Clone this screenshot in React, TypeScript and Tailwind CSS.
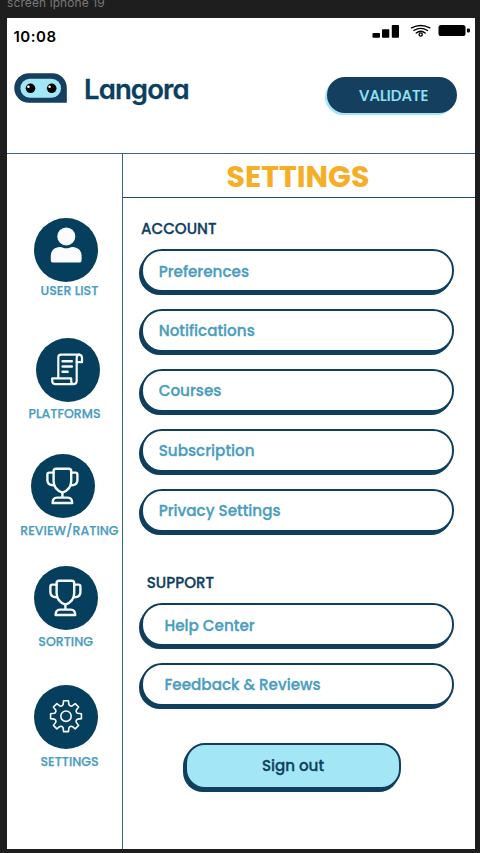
import type { ReactNode } from "react";

function UserIcon() {
  return (
    <svg viewBox="0 0 64 64" className="size-full" fill="#fbfcfd">
      <path d="M24 29.2 Q16.8 30.5 16.8 38.5 V42 Q16.8 44.6 19.4 44.6 H45 Q47.6 44.6 47.6 42 V38.5 Q47.6 30.5 40.4 29.2 Q37.5 28.7 35.5 29.7 Q32.2 31 29 29.7 Q27 28.7 24 29.2 Z" />
      <circle cx="32.3" cy="18.4" r="9" />
    </svg>
  );
}

function ScrollIcon() {
  return (
    <svg viewBox="0 0 64 64" className="size-full" fill="none" stroke="#f6f9fb" strokeWidth="2.2" strokeLinejoin="round" strokeLinecap="round">
      <path d="M22.3 39.8 V19.3 Q22.3 16.6 25 16.6 H43.2 Q46 16.9 46 20 V24.2 H40.8" />
      <path d="M43.2 16.6 Q40.7 17 40.7 20 V43.2 Q40.4 46.2 37.6 46.2 H19.2 Q16.2 46 16.2 42.8 V40.4 H35.2 V43.2 Q35.3 46 37.8 46.2" />
      <path d="M26.6 23.2 H35.8 M26.6 28.4 H35.8 M26.6 33.8 H31.6" strokeWidth="2.5" />
    </svg>
  );
}

function TrophyIcon() {
  return (
    <svg viewBox="0 0 64 64" className="size-full" fill="none" stroke="#f6f9fb" strokeWidth="2.4" strokeLinejoin="round" strokeLinecap="round">
      <path d="M25 14.8 H37.8 Q40.2 14.8 40.2 17.2 V27 C40.2 33 36.5 36.8 31.4 38.6 C26.3 36.8 22.6 33 22.6 27 V17.2 Q22.6 14.8 25 14.8 Z" />
      <path d="M22.6 18.6 H18.3 Q16.4 18.6 16.4 20.6 V26 Q16.4 30.3 20.6 31 L23.4 31.4" />
      <path d="M40.2 18.6 H44.5 Q46.4 18.6 46.4 20.6 V26 Q46.4 30.3 42.2 31 L39.4 31.4" />
      <path d="M31.4 38.8 V43.4 M26 43.6 H36.8 Q41.2 43.6 41.2 49 H21.6 Q21.6 43.6 26 43.6 Z" />
    </svg>
  );
}

// Outline of a cog: each tooth is a run of points, given as [angle offset, radius].
const tooth: [number, number][] = [
  [-19, 11.2],
  [-14, 12],
  [-9, 15.6],
  [9, 15.6],
  [14, 12],
  [19, 11.2],
];
const cog = Array.from({ length: 8 }, (_, i) =>
  tooth.map(([a, r]) => {
    const t = ((i * 45 + a) * Math.PI) / 180;
    return `${(32 + r * Math.sin(t)).toFixed(2)},${(31.2 - r * Math.cos(t)).toFixed(2)}`;
  }).join(" "),
).join(" ");

function GearIcon() {
  return (
    <svg viewBox="0 0 64 64" className="size-full" fill="none" stroke="#f6f9fb" strokeWidth="1.6" strokeLinejoin="round">
      <polygon points={cog} />
      <circle cx="32" cy="31.2" r="5.2" />
    </svg>
  );
}

function NavItem({ icon, label, item, circle, text }: { icon: ReactNode; label: string; item: string; circle: string; text: string }) {
  return (
    <li className={item}>
      <div className={`size-16 rounded-full bg-[#063f5d] ${circle}`}>{icon}</div>
      <div className={`text-[12.6px] leading-[14px] font-medium whitespace-nowrap text-[#4a9dbf] [-webkit-text-stroke:0.25px] ${text}`}>{label}</div>
    </li>
  );
}

function Option({ label, pad }: { label: string; pad: string }) {
  return (
    <button
      className={`block h-[43px] w-[313px] rounded-[21px] border-2 border-[#103f5e] bg-white text-left text-[15.2px] leading-none font-medium text-[#4a9dbf] shadow-[-2px_3px_0_#103f5e] [-webkit-text-stroke:0.3px] ${pad}`}
    >
      {label}
    </button>
  );
}

function StatusIcons() {
  return (
    <svg width="100" height="16" viewBox="372 23 100 16" className="mt-[5px]">
      <rect x="372.5" y="33" width="7.5" height="4.7" rx="0.8" />
      <rect x="382" y="29.2" width="7.3" height="8.5" rx="0.8" />
      <rect x="391.8" y="25" width="7.2" height="12.7" rx="0.8" />
      <g fill="none" stroke="#000" strokeWidth="1.35" strokeLinecap="round">
        <path d="M411.5 27.9 Q420.7 23 429.9 27.9" />
        <path d="M413.8 30.5 Q420.7 26.3 427.6 30.5" />
        <path d="M416.2 33 Q420.7 29.6 425.2 33" />
        <circle cx="420.7" cy="34.5" r="1.6" />
      </g>
      <rect x="438.5" y="25" width="27" height="11" rx="2.6" />
      <rect x="466.9" y="28.6" width="3" height="4" rx="1" />
    </svg>
  );
}

function Logo() {
  return (
    <svg width="53" height="31" viewBox="14 73 53 31">
      <path d="M29 73.3 H52.5 A14.3 14.7 0 0 1 66.8 88 V102.8 H29 A14.75 14.75 0 0 1 29 73.3 Z" fill="#163f5f" />
      <rect x="20.4" y="78.8" width="40.6" height="19" rx="9.5" fill="#a3e7f7" />
      <circle cx="30.5" cy="88.3" r="4.8" />
      <circle cx="51.7" cy="88.3" r="4.8" />
      <circle cx="28.4" cy="86.7" r="1.3" fill="#fff" />
      <circle cx="49.6" cy="86.7" r="1.3" fill="#fff" />
    </svg>
  );
}

export default function App() {
  return (
    <div className="h-[853px] w-[480px] overflow-hidden bg-[#1e1e1e] pr-[5.5px] pl-[7px] font-['Poppins','Inter',sans-serif] [font-feature-settings:'cv11']">
      <div className="h-[18px]">
        <p className="-translate-y-[4px] font-['Inter',sans-serif] text-[12px] leading-[14px] tracking-[0.1px] text-[#787878] [font-feature-settings:normal]">screen iphone 19</p>
      </div>

      <main className="flex h-[831px] flex-col bg-white">
        <header className="h-[136px] shrink-0 border-b border-[#3d6780]">
          <div className="flex h-[36px] justify-between pr-[2.5px] pl-[6.5px]">
            <time className="pt-[9.5px] font-['Inter',sans-serif] text-[15px] leading-[18px] font-semibold tracking-[0.5px] text-black">10:08</time>
            <StatusIcons />
          </div>
          <div className="flex items-start pl-[7px]">
            <div className="pt-[19px]">
              <Logo />
            </div>
            <span className="ml-[17px] pt-[19px] font-['Inter',sans-serif] text-[27.5px] leading-[32px] font-semibold tracking-[-0.9px] text-[#0b3f5f] [-webkit-text-stroke:0.3px]">Langora</span>
            <button className="mt-[23px] mr-[18px] ml-auto h-[36px] w-[129.5px] rounded-full bg-[#143f5e] pt-[2px] pl-[4px] text-[15.1px] font-medium text-[#93e2f6] shadow-[-2px_2px_0_#a3e7f7] [-webkit-text-stroke:0.2px]">
              VALIDATE
            </button>
          </div>
        </header>

        <div className="flex min-h-0 flex-1">
          <nav className="w-[116px] shrink-0 border-r border-[#2f6483]">
            <ul>
              <NavItem icon={<UserIcon />} label="USER LIST" item="pt-[63.5px]" circle="ml-[27.3px]" text="mt-[2px] ml-[33.5px]" />
              <NavItem icon={<ScrollIcon />} label="PLATFORMS" item="pt-[40px]" circle="ml-[28.6px]" text="mt-[5px] ml-[21.5px]" />
              <NavItem icon={<TrophyIcon />} label="REVIEW/RATING" item="pt-[33.5px]" circle="ml-[23.5px]" text="mt-[5.5px] ml-[13.3px]" />
              <NavItem icon={<TrophyIcon />} label="SORTING" item="pt-[28.5px]" circle="ml-[27px]" text="mt-[4.5px] ml-[31.3px]" />
              <NavItem icon={<GearIcon />} label="SETTINGS" item="pt-[36.5px]" circle="ml-[27.3px]" text="mt-[6px] ml-[33.5px]" />
            </ul>
          </nav>

          <section className="min-w-0 flex-1">
            <h1 className="h-[44px] border-b border-[#1d4f66] pl-[103.5px] text-[30px] leading-[45px] font-bold text-[#f5ae25]">SETTINGS</h1>

            <h2 className="mt-[22.5px] ml-[18px] text-[15.1px] leading-[16px] font-medium text-[#103f5e] [-webkit-text-stroke:0.3px]">ACCOUNT</h2>
            <div className="mt-[12.5px] ml-[18px] flex flex-col gap-[17px]">
              <Option label="Preferences" pad="pl-[15.7px] pt-[3px]" />
              <Option label="Notifications" pad="pl-[15.7px] pt-px" />
              <Option label="Courses" pad="pl-[15.7px]" />
              <Option label="Subscription" pad="pl-[15.7px]" />
              <Option label="Privacy Settings" pad="pl-[15.7px]" />
            </div>

            <h2 className="mt-[42.5px] ml-[23.7px] text-[15.1px] leading-[16px] font-medium text-[#103f5e] [-webkit-text-stroke:0.3px]">SUPPORT</h2>
            <div className="mt-[12.5px] ml-[18px] flex flex-col gap-[17px]">
              <Option label="Help Center" pad="pl-[21.5px] pt-[3px]" />
              <Option label="Feedback & Reviews" pad="pl-[21.5px]" />
            </div>

            <button className="mt-[37px] ml-[62px] block h-[45.5px] w-[216px] rounded-[20px] border-2 border-[#103f5e] bg-[#a3e7f7] pt-px text-[15.1px] font-medium text-[#103f5e] shadow-[-2px_3px_0_#103f5e] [-webkit-text-stroke:0.3px]">
              Sign out
            </button>
          </section>
        </div>
      </main>
    </div>
  );
}
